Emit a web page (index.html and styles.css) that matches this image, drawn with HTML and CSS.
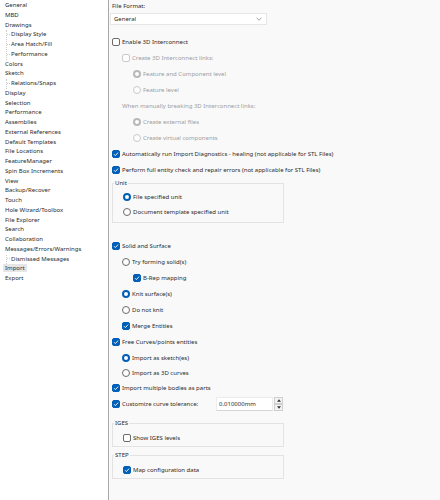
FILE: index.html
```html
<!DOCTYPE html>
<html lang="en">
<head>
  <meta charset="UTF-8">
  <title>System Options - Import</title>
  <link rel="stylesheet" href="styles.css">
</head>
<body>
  <div class="tree">
    <div class="node">General</div>
    <div class="node">MBD</div>
    <div class="node">Drawings</div>
    <div class="kids">
      <div class="node">Display Style</div>
      <div class="node">Area Hatch/Fill</div>
      <div class="node">Performance</div>
    </div>
    <div class="node">Colors</div>
    <div class="node">Sketch</div>
    <div class="kids">
      <div class="node">Relations/Snaps</div>
    </div>
    <div class="node">Display</div>
    <div class="node">Selection</div>
    <div class="node">Performance</div>
    <div class="node">Assemblies</div>
    <div class="node">External References</div>
    <div class="node">Default Templates</div>
    <div class="node">File Locations</div>
    <div class="node">FeatureManager</div>
    <div class="node">Spin Box Increments</div>
    <div class="node">View</div>
    <div class="node">Backup/Recover</div>
    <div class="node">Touch</div>
    <div class="node">Hole Wizard/Toolbox</div>
    <div class="node">File Explorer</div>
    <div class="node">Search</div>
    <div class="node">Collaboration</div>
    <div class="node">Messages/Errors/Warnings</div>
    <div class="kids">
      <div class="node">Dismissed Messages</div>
    </div>
    <div class="node"><span class="sel">Import</span></div>
    <div class="node">Export</div>
  </div>

  <div class="main">
    <div class="caption">File Format:</div>
    <div class="select">
      <span>General</span>
      <svg width="6" height="4" viewBox="0 0 6 4"><path d="M0.5 0.8 3 3.2 5.5 0.8" fill="none" stroke="#8a8a8a" stroke-width="0.8"/></svg>
    </div>

    <div class="opts">
      <div class="row"><span class="cb"></span>Enable 3D Interconnect</div>
      <div class="row i1 off"><span class="cb"></span>Create 3D Interconnect links:</div>
      <div class="row i2 off"><span class="rb on"></span>Feature and Component level</div>
      <div class="row i2 off"><span class="rb"></span>Feature level</div>
      <div class="row i1 off">When manually breaking 3D Interconnect links:</div>
      <div class="row i2 off"><span class="rb on"></span>Create external files</div>
      <div class="row i2 off"><span class="rb"></span>Create virtual components</div>
      <div class="row"><span class="cb on"><svg viewBox="0 0 8 8"><path d="M2 4.2 3.4 5.6 6.1 2.6"/></svg></span>Automatically run Import Diagnostics - healing (not applicable for STL Files)</div>
      <div class="row"><span class="cb on"><svg viewBox="0 0 8 8"><path d="M2 4.2 3.4 5.6 6.1 2.6"/></svg></span>Perform full entity check and repair errors (not applicable for STL Files)</div>
    </div>

    <fieldset class="group unit">
      <legend>Unit</legend>
      <div class="row i1"><span class="rb on"></span>File specified unit</div>
      <div class="row i1"><span class="rb"></span>Document template specified unit</div>
    </fieldset>

    <div class="opts solid">
      <div class="row"><span class="cb on"><svg viewBox="0 0 8 8"><path d="M2 4.2 3.4 5.6 6.1 2.6"/></svg></span>Solid and Surface</div>
      <div class="row i1"><span class="rb"></span>Try forming solid(s)</div>
      <div class="row i2"><span class="cb on"><svg viewBox="0 0 8 8"><path d="M2 4.2 3.4 5.6 6.1 2.6"/></svg></span>B-Rep mapping</div>
      <div class="row i1"><span class="rb on"></span>Knit surface(s)</div>
      <div class="row i1"><span class="rb"></span>Do not knit</div>
      <div class="row i1"><span class="cb on"><svg viewBox="0 0 8 8"><path d="M2 4.2 3.4 5.6 6.1 2.6"/></svg></span>Merge Entities</div>
      <div class="row"><span class="cb on"><svg viewBox="0 0 8 8"><path d="M2 4.2 3.4 5.6 6.1 2.6"/></svg></span>Free Curves/points entities</div>
      <div class="row i1 short"><span class="rb on"></span>Import as sketch(es)</div>
      <div class="row i1 short"><span class="rb"></span>Import as 3D curves</div>
      <div class="row"><span class="cb on"><svg viewBox="0 0 8 8"><path d="M2 4.2 3.4 5.6 6.1 2.6"/></svg></span>Import multiple bodies as parts</div>
      <div class="row">
        <span class="cb on"><svg viewBox="0 0 8 8"><path d="M2 4.2 3.4 5.6 6.1 2.6"/></svg></span>
        <span class="tol-label">Customize curve tolerance:</span>
        <span class="tol-input">0.010000mm</span>
        <span class="spin">
          <span class="spin-btn"><svg width="5" height="3" viewBox="0 0 5 3"><path d="M2.5 0 5 3H0z" fill="#333"/></svg></span>
          <span class="spin-btn"><svg width="5" height="3" viewBox="0 0 5 3"><path d="M0 0H5L2.5 3z" fill="#333"/></svg></span>
        </span>
      </div>
    </div>

    <fieldset class="group iges">
      <legend>IGES</legend>
      <div class="row i1"><span class="cb"></span>Show IGES levels</div>
    </fieldset>

    <fieldset class="group step">
      <legend>STEP</legend>
      <div class="row i1"><span class="cb on"><svg viewBox="0 0 8 8"><path d="M2 4.2 3.4 5.6 6.1 2.6"/></svg></span>Map configuration data</div>
    </fieldset>
  </div>
</body>
</html>
```

FILE: styles.css
```css
body { margin: 0; display: flex; height: 500px; overflow: hidden; background: #f9f9f9; color: #2a2a2a; font-family: "Noto Sans", sans-serif; font-size: 6px; }

/* left options tree */
.tree { width: 109px; flex: none; box-sizing: border-box; background: #fff; border-right: 1px solid #a8a8a8; padding-top: 1px; line-height: 9.75px; white-space: nowrap; }
.tree > .node { padding-left: 5px; }
.kids { margin-left: 6px; border-left: 1px dotted #cdcdcd; }
.kids .node::before { content: ""; display: inline-block; width: 3px; border-top: 1px dotted #cdcdcd; vertical-align: middle; margin-right: 1px; }
.sel { background: #e6e6e6; padding: 0 2px; margin-left: -2px; }

/* right pane */
.main { flex: 1; padding: 2px 0 0 3px; }
.caption { line-height: 9px; }
.select { margin: 2px 0 0 -2px; width: 157px; height: 12px; box-sizing: border-box; background: #fff; border: 1px solid #e6e6e6; display: flex; align-items: center; justify-content: space-between; padding: 0 4px 0 3px; }
.select svg { display: block; }
.opts { margin-top: 9px; }
.opts.solid { margin-top: 15px; }

.row { height: 16px; display: flex; align-items: center; white-space: nowrap; }
.row.short { height: 15px; }
.i1 { margin-left: 10px; }
.i2 { margin-left: 21px; }
.off { color: #9e9e9e; }

.cb { width: 8px; height: 8px; flex: none; box-sizing: border-box; border: 1px solid #6b6b6b; border-radius: 2px; background: #fdfdfd; margin-right: 2px; display: flex; align-items: center; justify-content: center; }
.cb.on { background: #005fb8; border-color: #005fb8; }
.cb svg { width: 8px; height: 8px; fill: none; stroke: #fff; stroke-width: 0.9; flex: none; }
.rb { width: 8px; height: 8px; flex: none; box-sizing: border-box; border: 1px solid #6b6b6b; border-radius: 50%; background: #fdfdfd; margin-right: 2px; }
.rb.on { border: 2.5px solid #005fb8; background: #fff; }
.off .cb, .off .rb { border-color: #c9c9c9; }
.off .rb.on { border: 2.5px solid #b8b8b8; }

/* group boxes */
.group { margin: 1px 0 0; padding: 2px 0 3px; width: 172px; min-inline-size: 0; box-sizing: border-box; border: 1px solid #e3e3e3; }
.group legend { padding: 0 1px; margin-left: 1px; line-height: 8px; }
.group .row { height: 15px; }
.group.iges { margin-top: 7px; padding: 3px 0 0; }
.group.step { margin-top: 4px; padding: 3px 0 0; }
.group.iges .row, .group.step .row { height: 16px; }

/* tolerance spin box */
.tol-label { width: 94px; }
.tol-input { width: 57px; height: 14px; box-sizing: border-box; background: #fff; border: 1px solid #ececec; border-bottom-color: #d6d6d6; padding-left: 2px; line-height: 12px; }
.spin { display: flex; flex-direction: column; margin-left: 1px; }
.spin-btn { width: 9px; height: 7px; box-sizing: border-box; border: 1px solid #cfcfcf; background: #f3f3f3; display: flex; align-items: center; justify-content: center; }
.spin-btn svg { display: block; width: 4px; height: 3px; }
```
